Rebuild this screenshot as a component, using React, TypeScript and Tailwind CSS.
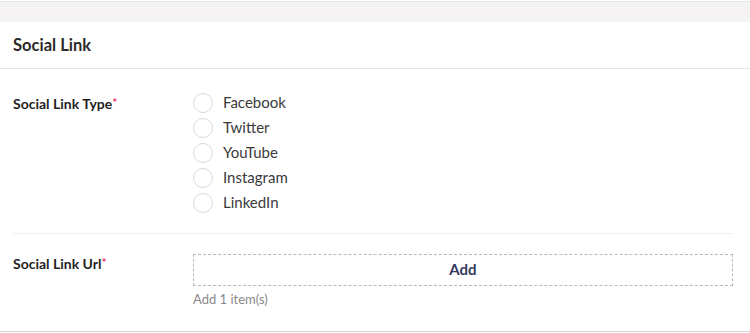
import React from 'react';

const options = ['Facebook', 'Twitter', 'YouTube', 'Instagram', 'LinkedIn'];

function Label({ text }: { text: string }) {
  return (
    <div className="w-[180px] shrink-0 text-[14px] font-bold text-[#1f1f1f]">
      {text}
      <span className="text-[#e8336b] text-[12px] align-top relative -top-px">*</span>
    </div>
  );
}

export default function App() {
  return (
    <div className="w-[750px] h-[333px] bg-white font-['Lato','Liberation_Sans',sans-serif] text-[#333]">
      <div className="pt-px">
        <div className="h-[21px] bg-[#f4f2f3] border-t border-[#e6e4e5]" />
      </div>

      {/* card header */}
      <div className="h-[47px] flex items-center px-[13px] border-b border-[#e6e6e6]">
        <span className="text-[16.5px] font-bold text-[#2b2b2b] pt-px">Social Link</span>
      </div>

      <div className="border-b border-[#d4d4d4]">
        <div className="ml-[13px] mr-[17px]">
          <div className="flex pt-[21px] pb-[18px] border-b border-[#f0f0f0]">
            <div className="leading-[27px]">
              <Label text="Social Link Type" />
            </div>
            <div className="flex flex-col">
              {options.map((o) => (
                <label key={o} className="flex items-center h-[25px] cursor-pointer">
                  <span className="w-[20px] h-[20px] rounded-full border border-[#d9d9d9] bg-white" />
                  <span className="ml-[10px] text-[15px] text-[#3a3a3a]">{o}</span>
                </label>
              ))}
            </div>
          </div>

          <div className="flex pt-[20px] pb-[23px]">
            <div className="leading-[20px]">
              <Label text="Social Link Url" />
            </div>
            <div className="flex-1">
              <button className="w-full h-[32px] border border-dashed border-[#b8b8b8] text-[15px] font-bold text-[#34395e] flex items-center justify-center pb-px">
                Add
              </button>
              <div className="mt-[4px] text-[13px] leading-[18px] text-[#8a8a8a]">Add 1 item(s)</div>
            </div>
          </div>
        </div>
      </div>
    </div>
  );
}
